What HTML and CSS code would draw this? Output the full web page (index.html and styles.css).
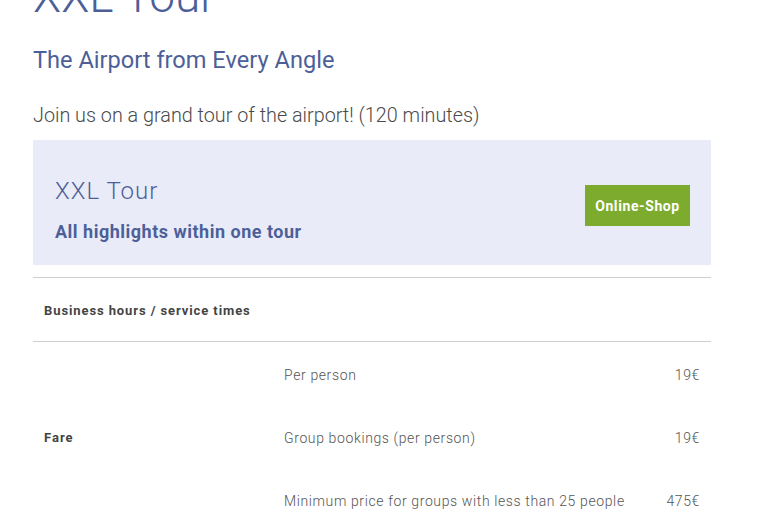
FILE: index.html
```html
<!DOCTYPE html>
<html>
<head>
<meta charset="utf-8">
<link rel="stylesheet" href="styles.css">
</head>
<body>
<main class="page">
  <h1 class="title">XXL Tour</h1>
  <h2 class="subtitle">The Airport from Every Angle</h2>
  <p class="intro">Join us on a grand tour of the airport! (120 minutes)</p>
  <section class="teaser">
    <div class="teaser-text">
      <div class="teaser-title">XXL Tour</div>
      <div class="teaser-sub">All highlights within one tour</div>
    </div>
    <a class="shop-btn" href="#">Online-Shop</a>
  </section>
  <table class="info">
    <tr class="head-row">
      <th colspan="3">Business hours / service times</th>
    </tr>
    <tr>
      <td class="label" rowspan="3">Fare</td>
      <td class="desc">Per person</td>
      <td class="price">19€</td>
    </tr>
    <tr>
      <td class="desc">Group bookings (per person)</td>
      <td class="price">19€</td>
    </tr>
    <tr>
      <td class="desc">Minimum price for groups with less than 25 people</td>
      <td class="price">475€</td>
    </tr>
  </table>
</main>
</body>
</html>
```
FILE: styles.css
```css
html, body {
  margin: 0;
  padding: 0;
  background: #ffffff;
  overflow: hidden;
}
body {
  font-family: Roboto, "Liberation Sans", sans-serif;
}
.page {
  width: 678px;
  padding-left: 33px;
}
.title {
  margin: -31px 0 0 0;
  font-size: 46px;
  line-height: 54px;
  font-weight: 300;
  color: #4d5f98;
}
.subtitle {
  margin: 22px 0 0 0;
  font-size: 23.6px;
  line-height: 30px;
  font-weight: 400;
  color: #4d5f98;
}
.intro {
  margin: 28px 0 0 0;
  font-size: 19.8px;
  line-height: 26px;
  font-weight: 300;
  color: #4a4a4a;
}
.teaser {
  margin-top: 11px;
  background: #e9ecf8;
  display: flex;
  justify-content: space-between;
  align-items: flex-start;
  padding: 36px 21px 22px 22px;
  height: 67px;
}
.teaser-title {
  font-size: 24px;
  line-height: 30px;
  font-weight: 300;
  letter-spacing: 1px;
  color: #4d5f98;
}
.teaser-sub {
  margin-top: 14px;
  font-size: 18px;
  line-height: 23px;
  font-weight: 700;
  letter-spacing: 0.5px;
  color: #4d5f98;
}
.shop-btn {
  margin-top: 9px;
  width: 105px;
  height: 41px;
  background: #7dab2e;
  color: #ffffff;
  font-size: 14px;
  font-weight: 700;
  letter-spacing: 0.6px;
  text-decoration: none;
  display: flex;
  align-items: center;
  justify-content: center;
}
.info {
  margin-top: 12px;
  width: 100%;
  border-collapse: collapse;
  border-top: 1px solid #cfcfcf;
  font-size: 13px;
}
.head-row th {
  text-align: left;
  font-weight: 700;
  letter-spacing: 0.9px;
  color: #444444;
  height: 61px;
  padding: 2px 11px 0 11px;
  border-bottom: 1px solid #cfcfcf;
}
.info td {
  height: 61px;
  padding: 2px 11px 0 11px;
  vertical-align: middle;
}
.label {
  width: 218px;
  font-weight: 700;
  letter-spacing: 1px;
  color: #444444;
}
.desc {
  color: #555555;
  font-weight: 300;
  font-size: 14px;
  letter-spacing: 0.62px;
}
.price {
  text-align: right;
  color: #555555;
  font-weight: 300;
  font-size: 14px;
  letter-spacing: 0.62px;
}
```
